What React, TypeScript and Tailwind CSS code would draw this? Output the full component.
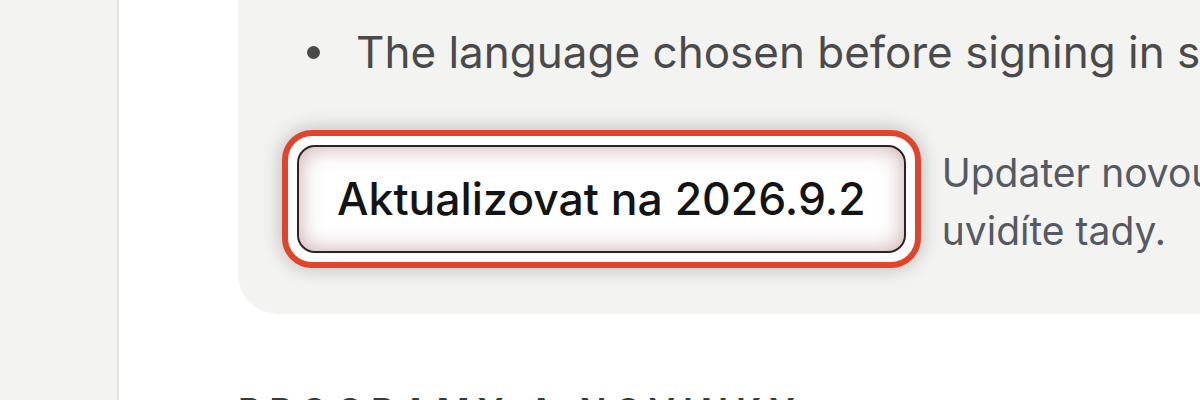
export default function App() {
  return (
    <div className="flex h-[400px] w-[1200px] overflow-hidden bg-white" style={{ fontFamily: "Inter, 'Noto Sans', sans-serif" }}>
      <aside className="w-[119px] shrink-0 border-r-2 border-[#e4e4e2] bg-[#f3f3f2]" />
      <main className="flex min-w-0 flex-1 flex-col pl-[119px]">
        <section className="w-[1100px] shrink-0 rounded-bl-[40px] bg-[#f3f3f2] pb-[46px] pl-[44px] pt-[26px]">
          <ul className="pl-[25px]">
            <li className="flex items-center gap-[36px] whitespace-nowrap text-[44px] leading-[52px] text-[#4a4a4a]">
              <span className="h-[13px] w-[13px] shrink-0 rounded-full bg-[#4a4a4a]" />
              The language chosen before signing in stays active
            </li>
          </ul>
          <div className="mt-[52px] flex items-start gap-[21px]">
            <div className="shrink-0 rounded-[30px] border-[6px] border-[#e0452b] bg-white p-[9px] shadow-[0_0_20px_rgba(0,0,0,0.25)]">
              <button className="flex h-[108px] items-center rounded-[18px] border-2 border-[#2e2222] bg-white px-[38px] text-[44.5px] font-medium text-[#141414] shadow-[inset_0_0_22px_rgba(150,80,80,0.5)]">
                Aktualizovat na 2026.9.2
              </button>
            </div>
            <p className="mt-[14px] whitespace-nowrap text-[39px] leading-[58px] text-[#555a62]">
              Updater novou verzi najde sám,
              <br />
              uvidíte tady.
            </p>
          </div>
        </section>
        <h2 className="mt-[70px] whitespace-nowrap text-[36px] font-semibold uppercase tracking-[0.22em] text-[#3a3a3a]">
          Programy a novinky
        </h2>
      </main>
    </div>
  );
}
